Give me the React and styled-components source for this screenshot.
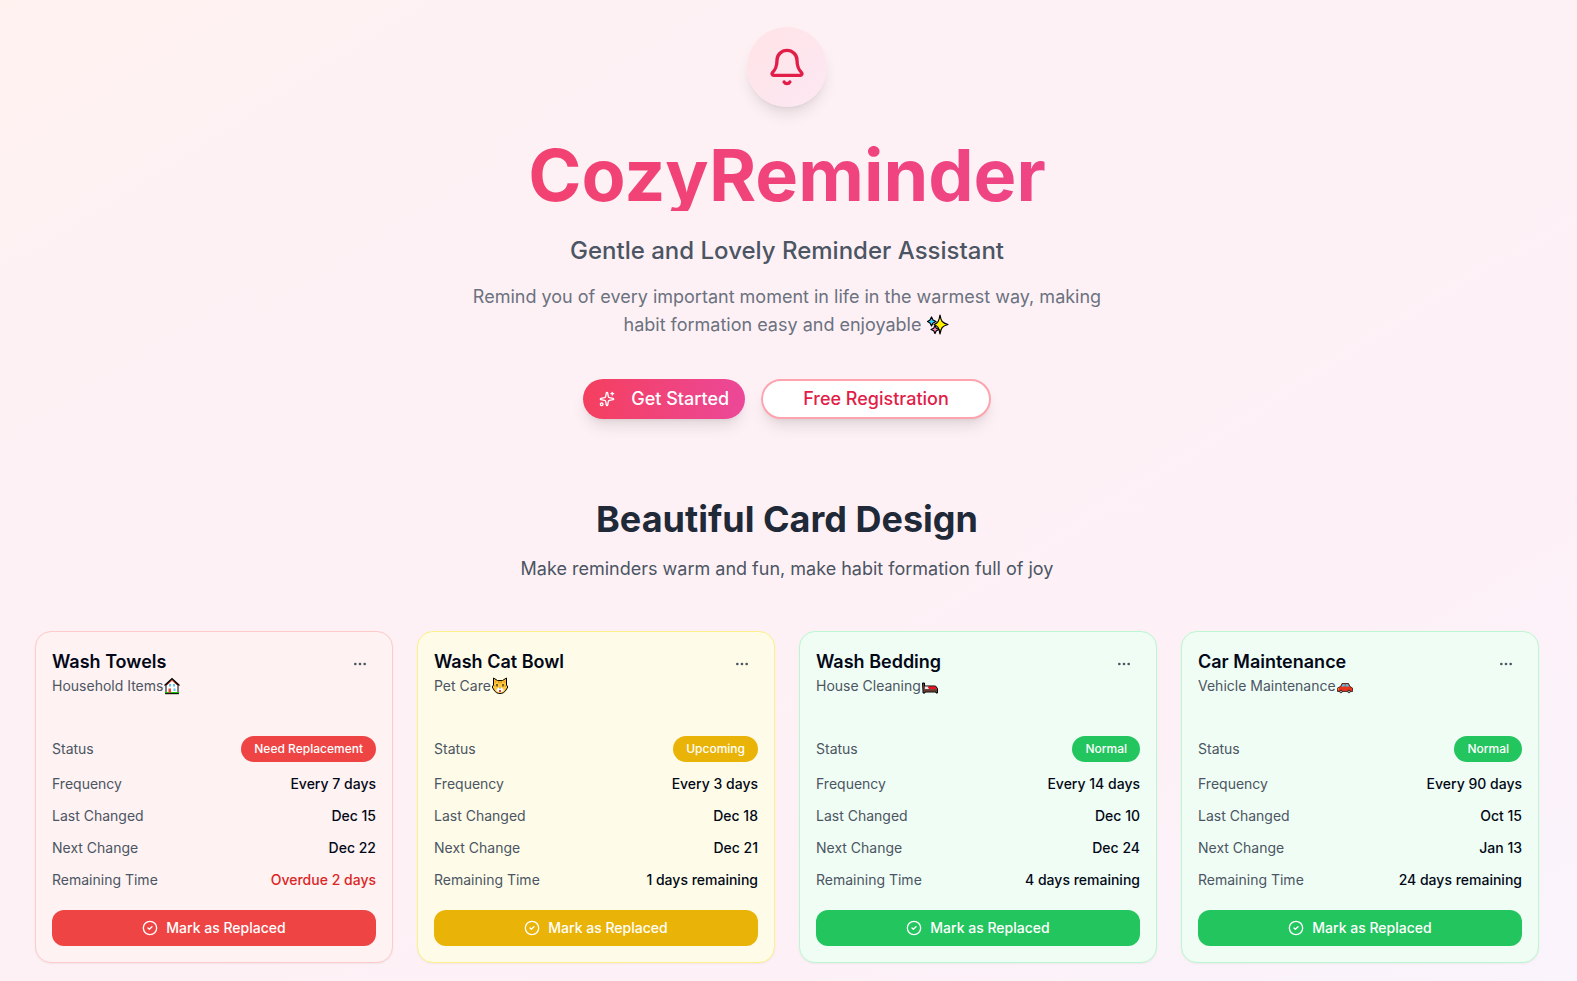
import React from "react";
import styled, { createGlobalStyle } from "styled-components";
import { Bell, Sparkles, Ellipsis, CircleCheck } from "lucide-react";

const GlobalStyle = createGlobalStyle`
  *, *::before, *::after { box-sizing: border-box; }
  body { margin: 0; font-family: Inter, "Liberation Sans", sans-serif; color: #020817; }
  h1, h2, h3, p, dl, dt, dd { margin: 0; }
  button { font-family: inherit; cursor: pointer; }
`;

const Page = styled.div`
  min-height: 100vh;
  padding: 27px 3px 18px 0;
  background: linear-gradient(to bottom right, #fff2ef 0%, #fef1f4 18%, #fdf1f7 75%, #faf4fc 100%);
`;

const Container = styled.main`
  max-width: 1536px;
  margin: 0 auto;
  padding: 0 16px;
`;

const Hero = styled.section`
  display: flex;
  flex-direction: column;
  align-items: center;
  text-align: center;
`;

const BellDisc = styled.div`
  display: flex;
  align-items: center;
  justify-content: center;
  width: 80px;
  height: 80px;
  margin-bottom: 32px;
  border-radius: 50%;
  color: #e11d48;
  background: linear-gradient(to bottom right, #ffe4e6, #fce7f3);
  box-shadow: 0 10px 15px -3px rgba(0, 0, 0, 0.1), 0 4px 6px -4px rgba(0, 0, 0, 0.1);
`;

const Title = styled.h1`
  align-self: stretch;
  margin-bottom: 24px;
  font-size: 72px;
  line-height: 72px;
  font-weight: 700;
  color: transparent;
  background: linear-gradient(to right, #f43f5e, #ec4899);
  background-clip: text;
  -webkit-background-clip: text;
`;

const Tagline = styled.p`
  margin-bottom: 16px;
  font-size: 24px;
  line-height: 32px;
  font-weight: 500;
  color: #4b5563;
`;

const Lead = styled.p`
  max-width: 672px;
  margin-bottom: 40px;
  font-size: 18px;
  line-height: 28px;
  color: #6b7280;
`;

const Actions = styled.div`
  display: flex;
  gap: 16px;
  margin-bottom: 80px;
`;

const PillButton = styled.button`
  display: inline-flex;
  align-items: center;
  gap: 16px;
  height: 40px;
  padding: 0 ${(p) => (p.$outline ? 40 : 16)}px;
  border: ${(p) => (p.$outline ? "2px solid #fda4af" : "0")};
  border-radius: 20px;
  font-size: 18px;
  line-height: 28px;
  font-weight: 500;
  color: ${(p) => (p.$outline ? "#e11d48" : "#fff")};
  background: ${(p) => (p.$outline ? "#fff" : "linear-gradient(to right, #f43f5e, #ec4899)")};
  box-shadow: 0 10px 15px -3px rgba(0, 0, 0, 0.1), 0 4px 6px -4px rgba(0, 0, 0, 0.1);
`;

const SectionHead = styled.header`
  margin-bottom: 48px;
  text-align: center;
`;

const SectionTitle = styled.h2`
  margin-bottom: 16px;
  font-size: 36px;
  line-height: 40px;
  font-weight: 700;
  color: #1f2937;
`;

const SectionText = styled.p`
  font-size: 18px;
  line-height: 28px;
  color: #4b5563;
`;

const CardGrid = styled.div`
  display: grid;
  grid-template-columns: repeat(4, minmax(0, 1fr));
  gap: 24px;
  @media (max-width: 1100px) { grid-template-columns: repeat(2, minmax(0, 1fr)); }
  @media (max-width: 640px) { grid-template-columns: 1fr; }
`;

const tones = {
  red: { bg: "#fef2f2", border: "#fecaca", solid: "#ef4444" },
  yellow: { bg: "#fefce8", border: "#fef08a", solid: "#eab308" },
  green: { bg: "#f0fdf4", border: "#bbf7d0", solid: "#22c55e" },
};

const Card = styled.article`
  padding: 16px;
  border: 1px solid ${(p) => tones[p.$tone].border};
  border-radius: 16px;
  background: ${(p) => tones[p.$tone].bg};
  box-shadow: 0 1px 2px rgba(0, 0, 0, 0.05);
`;

const CardHead = styled.header`
  display: flex;
  justify-content: space-between;
  align-items: flex-start;
  margin-bottom: 40px;
`;

const CardTitle = styled.h3`
  font-size: 18px;
  line-height: 28px;
  font-weight: 600;
`;

const Category = styled.p`
  display: flex;
  align-items: center;
  font-size: 14px;
  line-height: 20px;
  color: #4b5563;
`;

const MenuButton = styled.button`
  display: flex;
  align-items: center;
  justify-content: center;
  width: 32px;
  height: 32px;
  padding: 0;
  border: 0;
  border-radius: 8px;
  color: #4b5563;
  background: none;
`;

const Facts = styled.dl`
  display: flex;
  flex-direction: column;
  gap: 12px;
  margin-bottom: 20px;
`;

const Fact = styled.div`
  display: flex;
  justify-content: space-between;
  align-items: center;
  font-size: 14px;
  line-height: 20px;
`;

const Label = styled.dt`
  color: #4b5563;
`;

const Value = styled.dd`
  font-weight: 500;
  color: ${(p) => (p.$overdue ? "#dc2626" : "inherit")};
`;

const Badge = styled.dd`
  padding: 5px 13px;
  border-radius: 13px;
  font-size: 12px;
  line-height: 16px;
  font-weight: 500;
  color: #fff;
  background: ${(p) => tones[p.$tone].solid};
`;

const DoneButton = styled.button`
  display: flex;
  align-items: center;
  justify-content: center;
  gap: 8px;
  width: 100%;
  height: 36px;
  padding: 0 12px;
  border: 0;
  border-radius: 12px;
  font-size: 14px;
  line-height: 20px;
  font-weight: 500;
  color: #fff;
  background: ${(p) => tones[p.$tone].solid};
`;

const Pictogram = styled.svg`
  flex: none;
  width: ${(p) => p.$size}px;
  height: ${(p) => p.$size}px;
`;

const InlinePictogram = styled(Pictogram)`
  vertical-align: -6px;
`;

const Stars = () => (
  <InlinePictogram $size={24} viewBox="0 0 24 24" role="img" aria-label="sparkles" strokeLinejoin="round" stroke="#000" strokeWidth="1.2">
    <path d="M14 2 C15 8 16 10 22 11.500 C16 13 15 15 14 21 C13 15 12 13 8 11.500 C12 10 13 8 14 2Z" fill="#fff100" />
    <path d="M5.500 4 L7 7 L10 8.500 L7 10 L5.500 13 L4 10 L1.500 8.500 L4 7Z" fill="#38cfff" />
    <path d="M9 12.500 L10.300 15.200 L13 16.500 L10.300 17.800 L9 20.500 L7.700 17.800 L5 16.500 L7.700 15.200Z" fill="#ff8cc0" />
  </InlinePictogram>
);

const House = () => (
  <Pictogram $size={18} viewBox="0 0 18 18" role="img" aria-label="house">
    <path d="M3 8 L9 2.500 L15 8 V16 H3Z" fill="#fff" stroke="#000" />
    <path d="M1.500 8.500 L9 1.500 L16.500 8.500" fill="none" stroke="#000" strokeWidth="1.200" />
    <path d="M3.500 8.300 L9 3.300 L14.500 8.300" fill="none" stroke="#d8341f" strokeWidth="1" />
    <path d="M6 7h2v2.500H6zM10 7h2v2.500h-2zM10.500 11.500h2V14h-2z" fill="#5cc8f2" />
    <path d="M5.500 11.500H8V16H5.500z" fill="#dc4b32" />
    <path d="M2 15H5.500V16.500H2zM8 15H16V16.500H8z" fill="#16c60c" />
    <path d="M2 16.700H16" stroke="#000" />
  </Pictogram>
);

const Cat = () => (
  <Pictogram $size={18} viewBox="0 0 18 18" role="img" aria-label="cat face">
    <path d="M2.500 1 L6.500 3.500 H11.500 L15.500 1 V8 L16.800 10 L15 13 C13.500 15.500 11.500 16.500 9 16.500 C6.500 16.500 4.500 15.500 3 13 L1.200 10 L2.500 8Z" fill="#ffc83d" stroke="#000" strokeLinejoin="round" />
    <path d="M3.500 3 L6 4.800 L3.800 6.500ZM14.500 3 L12 4.800 L14.200 6.500Z" fill="#f2a01e" />
    <path d="M7.500 3.800V6M9 3.800V6.500M10.500 3.800V6M3 9H4.500M15 9H13.500" stroke="#ca8b12" strokeWidth=".8" />
    <path d="M9 10.500 C7 10.500 5 12 5.700 14 C7 15.800 11 15.800 12.300 14 C13 12 11 10.500 9 10.500Z" fill="#fff" />
    <path d="M6 7V9.500M12 7V9.500" stroke="#222" strokeWidth="1.200" />
    <path d="M8.200 10.800H9.800L9 11.800Z" fill="#222" />
    <path d="M8 13H10V15H8z" fill="#e8384f" />
  </Pictogram>
);

const Bed = () => (
  <Pictogram $size={18} viewBox="0 0 18 18" role="img" aria-label="bed">
    <path d="M1.500 6 H3.500 V9 H14.500 L16.500 11.500 V16 H15 V15 H4 V16 H2 V14Z" fill="#7a4a3a" stroke="#000" strokeLinejoin="round" />
    <path d="M4 9.500 H7.500 L9 12 H4Z" fill="#e8e8ee" />
    <path d="M6.500 9.500 H14.200 L15.800 12 H8Z" fill="#e81224" />
    <path d="M3 13.500 H15.800" stroke="#65392e" strokeWidth="1.500" />
  </Pictogram>
);

const Car = () => (
  <Pictogram $size={18} viewBox="0 0 18 18" role="img" aria-label="car">
    <path d="M1.500 11 L4.500 9.500 L6 6.500 H12.500 L14 9.500 L16.500 11 V14.500 H1.500Z" fill="#e8341c" stroke="#331512" strokeWidth=".8" strokeLinejoin="round" />
    <path d="M6.700 7.200H8.800V9.600H5.500ZM9.600 7.200H12L13.100 9.600H9.600Z" fill="#4ac6ec" />
    <path d="M1.800 12H3" stroke="#ffd23c" />
    <circle cx="5" cy="14.500" r="1.300" fill="#bbb" stroke="#111" strokeWidth=".8" />
    <circle cx="13" cy="14.500" r="1.300" fill="#bbb" stroke="#111" strokeWidth=".8" />
  </Pictogram>
);

const reminders = [
  { title: "Wash Towels", category: "Household Items", Icon: House, tone: "red", status: "Need Replacement", frequency: "Every 7 days", last: "Dec 15", next: "Dec 22", remaining: "Overdue 2 days", overdue: true },
  { title: "Wash Cat Bowl", category: "Pet Care", Icon: Cat, tone: "yellow", status: "Upcoming", frequency: "Every 3 days", last: "Dec 18", next: "Dec 21", remaining: "1 days remaining" },
  { title: "Wash Bedding", category: "House Cleaning", Icon: Bed, tone: "green", status: "Normal", frequency: "Every 14 days", last: "Dec 10", next: "Dec 24", remaining: "4 days remaining" },
  { title: "Car Maintenance", category: "Vehicle Maintenance", Icon: Car, tone: "green", status: "Normal", frequency: "Every 90 days", last: "Oct 15", next: "Jan 13", remaining: "24 days remaining" },
];

function ReminderCard({ item }) {
  const { Icon } = item;
  return (
    <Card $tone={item.tone}>
      <CardHead>
        <div>
          <CardTitle>{item.title}</CardTitle>
          <Category>{item.category}<Icon /></Category>
        </div>
        <MenuButton type="button" aria-label={`Options for ${item.title}`}>
          <Ellipsis size={16} />
        </MenuButton>
      </CardHead>
      <Facts>
        <Fact><Label>Status</Label><Badge $tone={item.tone}>{item.status}</Badge></Fact>
        <Fact><Label>Frequency</Label><Value>{item.frequency}</Value></Fact>
        <Fact><Label>Last Changed</Label><Value>{item.last}</Value></Fact>
        <Fact><Label>Next Change</Label><Value>{item.next}</Value></Fact>
        <Fact><Label>Remaining Time</Label><Value $overdue={item.overdue}>{item.remaining}</Value></Fact>
      </Facts>
      <DoneButton type="button" $tone={item.tone}>
        <CircleCheck size={16} />
        Mark as Replaced
      </DoneButton>
    </Card>
  );
}

export default function App() {
  return (
    <>
      <GlobalStyle />
      <Page>
        <Container>
          <Hero>
            <BellDisc><Bell size={40} /></BellDisc>
            <Title>CozyReminder</Title>
            <Tagline>Gentle and Lovely Reminder Assistant</Tagline>
            <Lead>
              Remind you of every important moment in life in the warmest way, making habit formation easy and enjoyable <Stars />
            </Lead>
            <Actions>
              <PillButton type="button"><Sparkles size={16} />Get Started</PillButton>
              <PillButton type="button" $outline>Free Registration</PillButton>
            </Actions>
          </Hero>
          <section>
            <SectionHead>
              <SectionTitle>Beautiful Card Design</SectionTitle>
              <SectionText>Make reminders warm and fun, make habit formation full of joy</SectionText>
            </SectionHead>
            <CardGrid>
              {reminders.map((item) => <ReminderCard key={item.title} item={item} />)}
            </CardGrid>
          </section>
        </Container>
      </Page>
    </>
  );
}
